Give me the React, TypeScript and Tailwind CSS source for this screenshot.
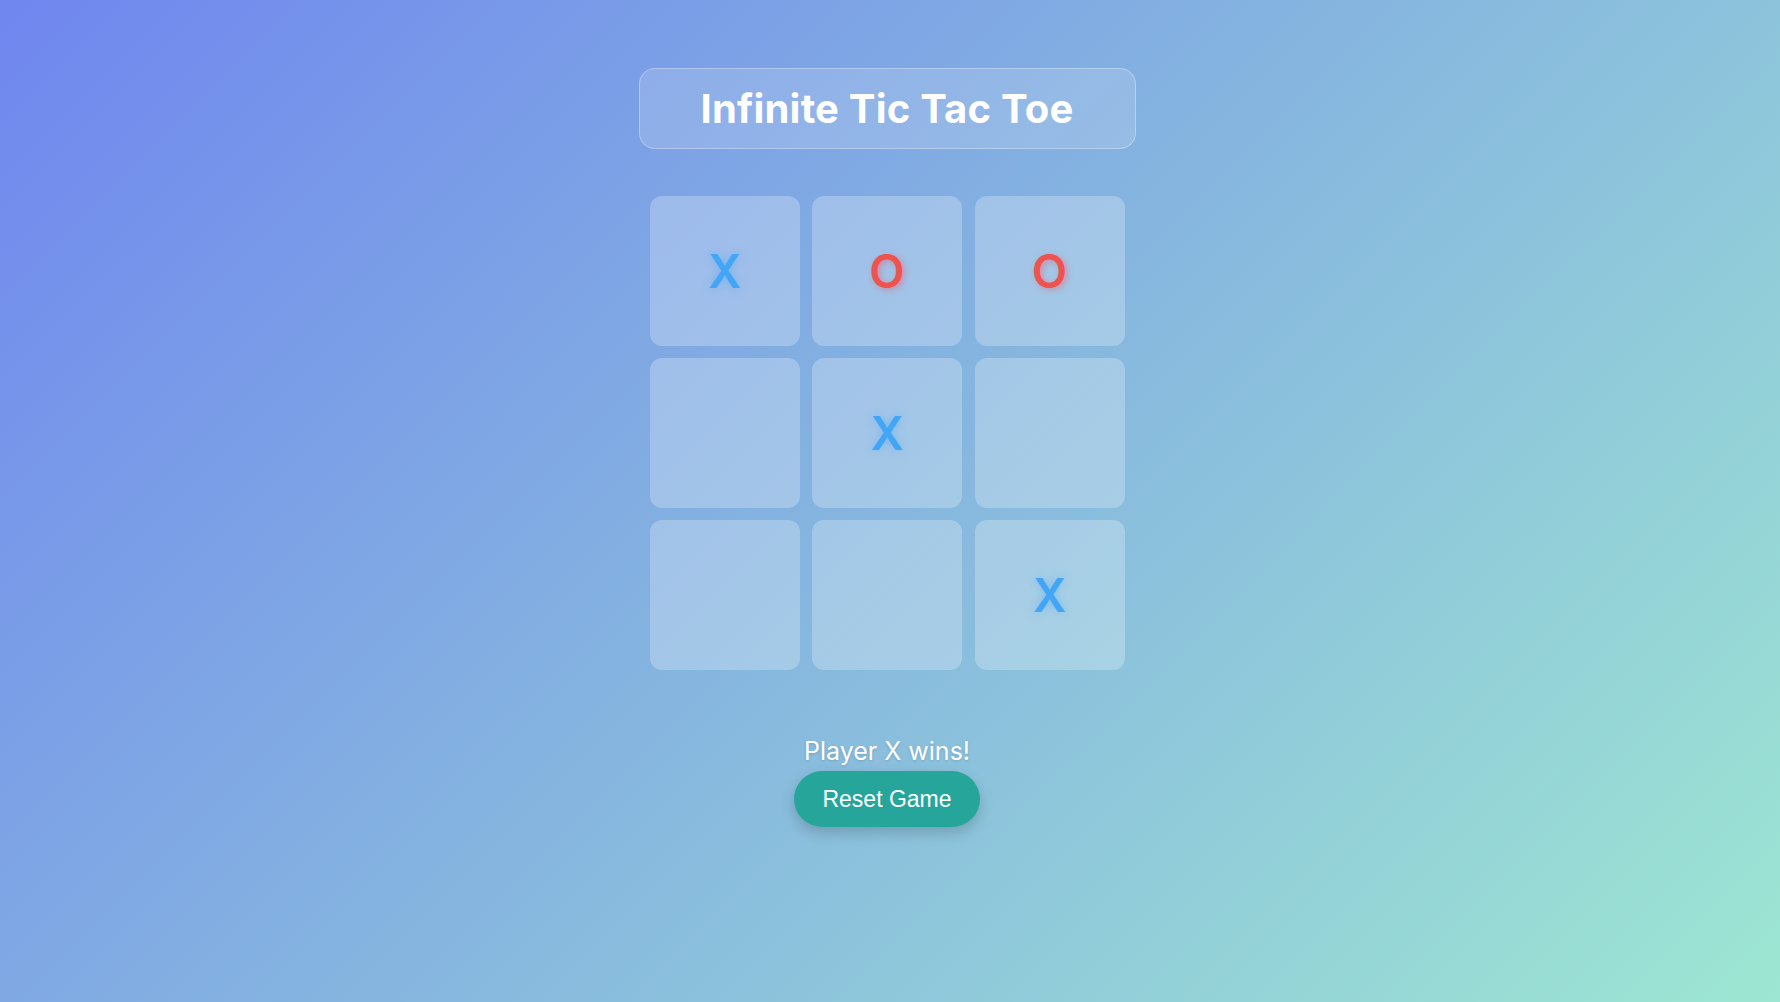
import React, { useState } from 'react';

type Mark = 'X' | 'O' | null;

const initialBoard: Mark[] = ['X', 'O', 'O', null, 'X', null, null, null, 'X'];

const Cell = ({ value, onClick }: { value: Mark; onClick: () => void }) => {
    return (
        <button
            onClick={onClick}
            className="w-[150px] h-[150px] rounded-[12px] bg-white/25 flex items-center justify-center cursor-pointer"
        >
            {value === 'X' && (
                <span className="text-[46px] font-semibold leading-none text-[#42a5f5] [text-shadow:0_0_10px_rgba(66,165,245,0.45)]">X</span>
            )}
            {value === 'O' && (
                <span className="text-[46px] font-semibold leading-none text-[#ef5350] [text-shadow:2px_2px_6px_rgba(239,83,80,0.45)]">O</span>
            )}
        </button>
    );
};

const App = () => {
    const [board, setBoard] = useState<Mark[]>(initialBoard);

    return (
        <div className="min-h-[1002px] w-full bg-[linear-gradient(135deg,#6f86ef_0%,#86b6df_50%,#9de6d2_100%)] font-['Inter','Noto_Sans',sans-serif]">
            <div className="flex flex-col items-center pt-[68px] pr-[6px]">
                <div className="w-[497px] h-[81px] rounded-[16px] border border-white/30 bg-white/15 flex items-center justify-center">
                    <h1 className="text-[40px] font-bold text-white tracking-[0.2px]">Infinite Tic Tac Toe</h1>
                </div>

                <div className="mt-[47px] grid grid-cols-[repeat(3,150px)] gap-x-[12.5px] gap-y-3">
                    {board.map((v, i) => (
                        <Cell key={i} value={v} onClick={() => {}} />
                    ))}
                </div>

                <div className="mt-[64px] h-[36px] flex items-center text-[25px] text-white [text-shadow:0_1px_3px_rgba(0,0,0,0.15)]">
                    Player X wins!
                </div>

                <button
                    onClick={() => setBoard(Array(9).fill(null))}
                    className="mt-[1px] w-[186px] h-[56px] rounded-full bg-[#26a69a] text-white text-[23px] font-['Liberation_Sans','Arial',sans-serif] shadow-[0_6px_14px_rgba(0,0,0,0.18)]"
                >
                    Reset Game
                </button>
            </div>
        </div>
    );
};

export default App;
